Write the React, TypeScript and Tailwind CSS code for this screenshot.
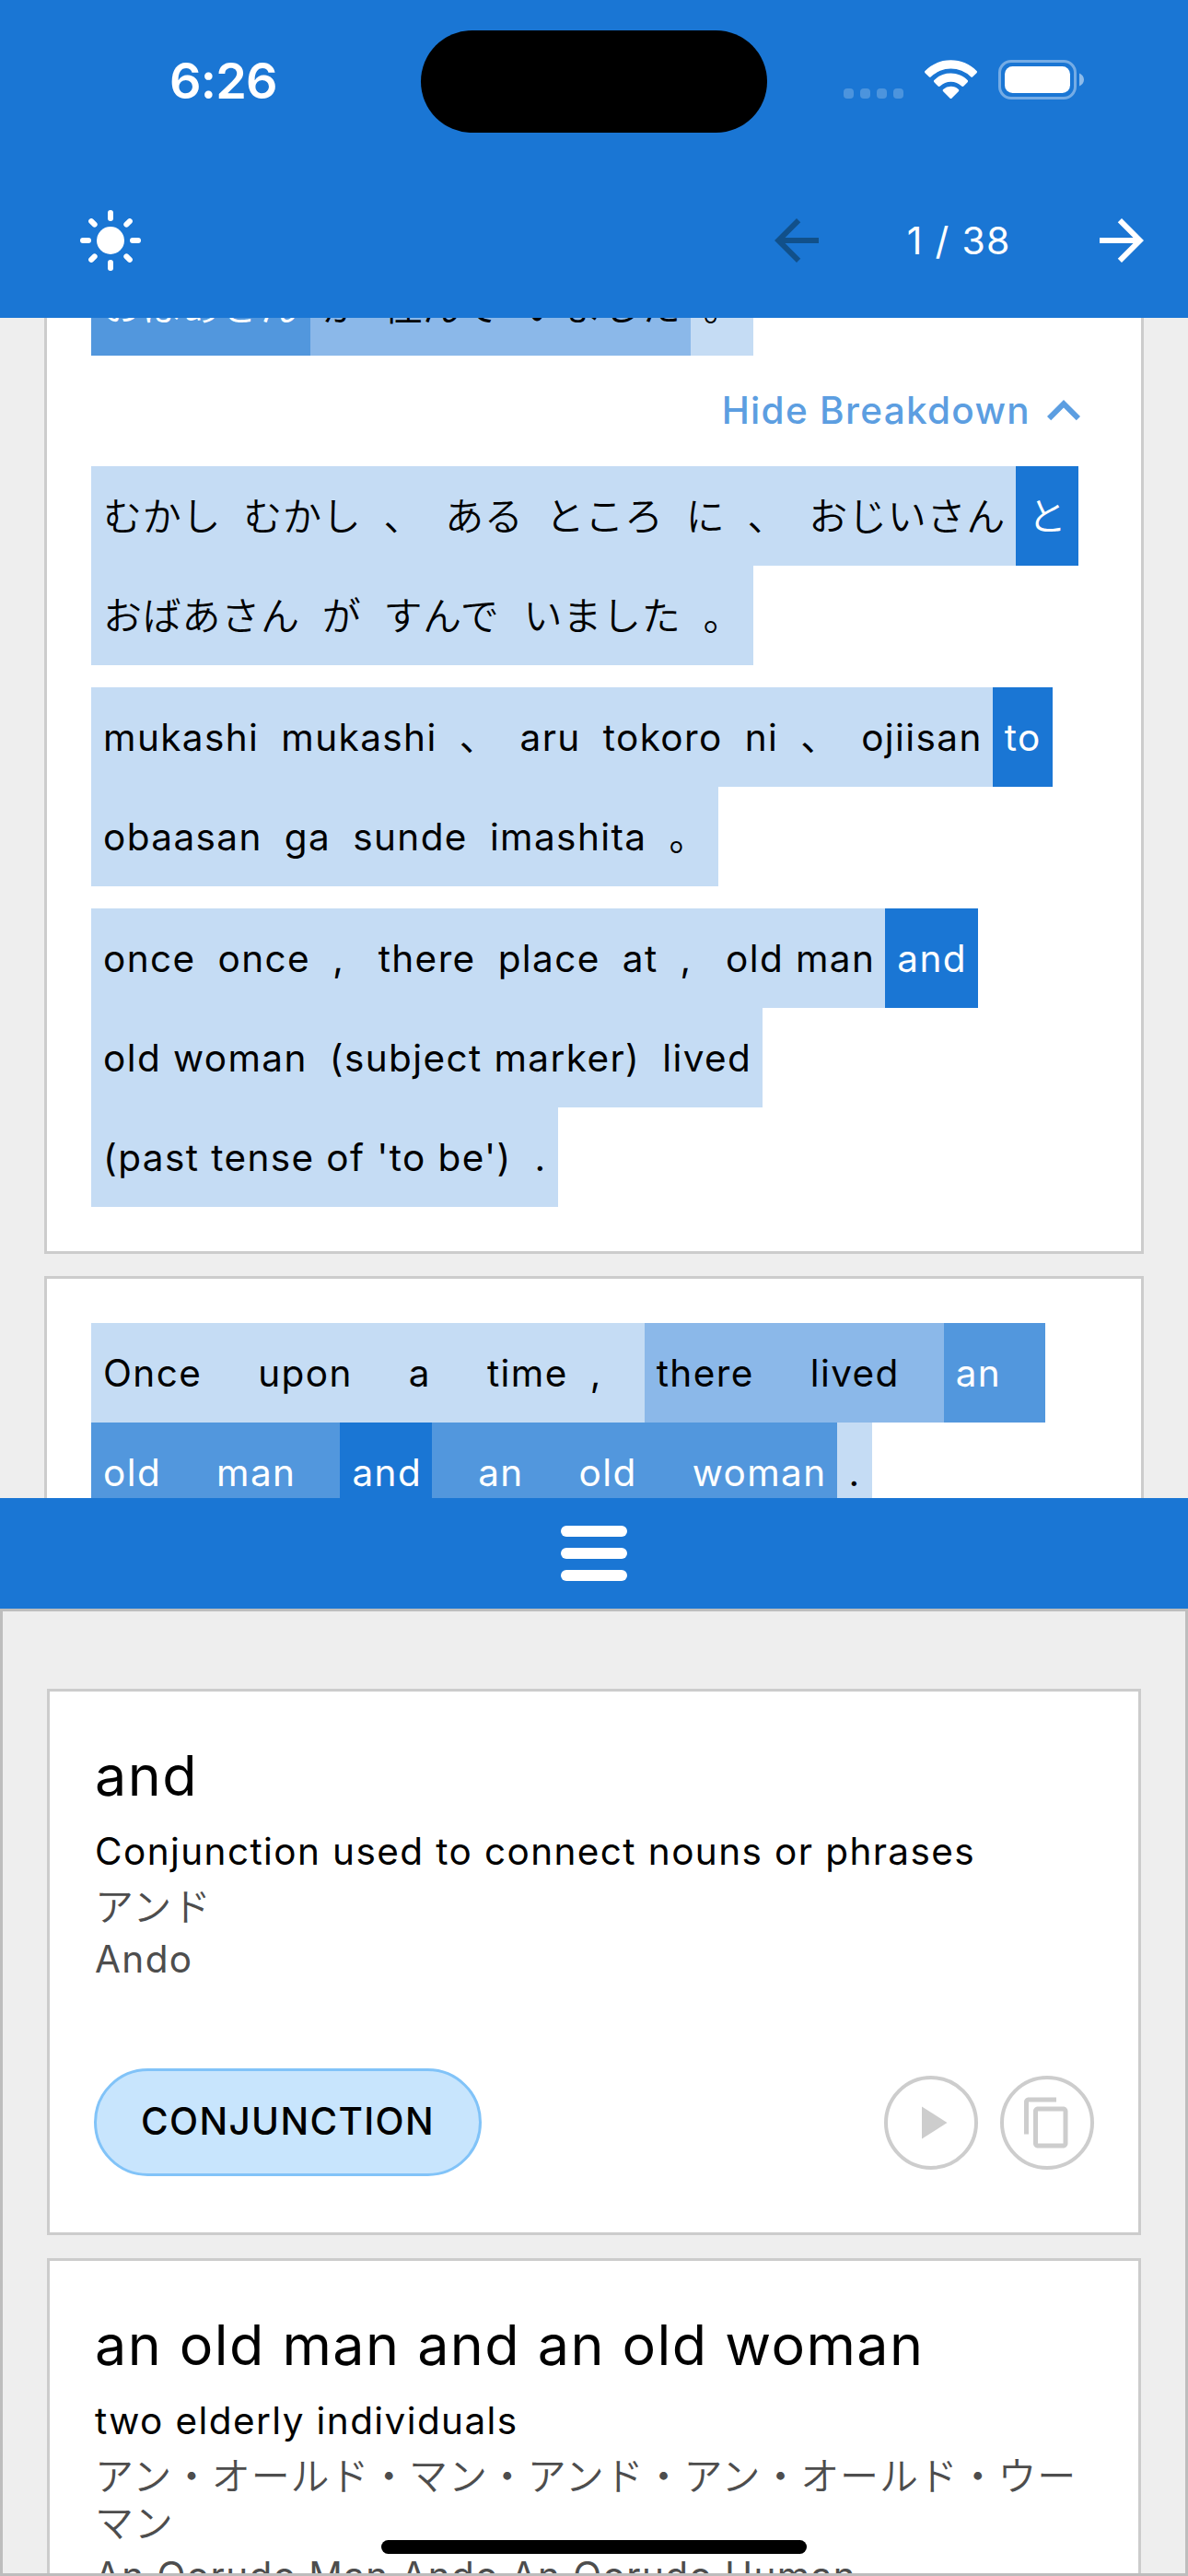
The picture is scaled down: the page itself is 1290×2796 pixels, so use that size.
import type { ReactNode } from 'react'
import { MdArrowBack, MdArrowForward, MdContentCopy, MdExpandLess, MdPlayArrow } from 'react-icons/md'

type Tone = 'base' | 'phrase' | 'group' | 'active'

interface Word {
  text: string
  tone?: Tone
  className?: string
}

const TONES: Record<Tone, string> = {
  base: 'bg-[#c5dcf4] text-black',
  phrase: 'bg-[#8bb8e9] text-black',
  group: 'bg-[#5297dd] text-white',
  active: 'bg-[#1a76d4] text-white'
}

const JP = "font-['Inter','Noto_Sans_CJK_JP',sans-serif] font-[350] text-[42px] tracking-[0.73px]"
const LATIN = "font-['Inter','Noto_Sans_CJK_JP',sans-serif] text-[40.5px] tracking-[1.4px]"

const clippedLine: Word[] = [
  { text: 'おばあさん', tone: 'group' },
  { text: 'が', tone: 'phrase' },
  { text: '住んで', tone: 'phrase' },
  { text: 'いました', tone: 'phrase', className: 'pl-[14px]' },
  { text: '。' }
]

const kanaLines: Word[][] = [
  [
    { text: 'むかし' },
    { text: 'むかし' },
    { text: '、' },
    { text: 'ある' },
    { text: 'ところ' },
    { text: 'に' },
    { text: '、' },
    { text: 'おじいさん' },
    { text: 'と', tone: 'active' }
  ],
  [
    { text: 'おばあさん' },
    { text: 'が' },
    { text: 'すんで' },
    { text: 'いました', className: 'pl-[14px]' },
    { text: '。' }
  ]
]

const romajiLines: Word[][] = [
  [
    { text: 'mukashi' },
    { text: 'mukashi' },
    { text: '、' },
    { text: 'aru' },
    { text: 'tokoro' },
    { text: 'ni' },
    { text: '、' },
    { text: 'ojiisan' },
    { text: 'to', tone: 'active' }
  ],
  [{ text: 'obaasan' }, { text: 'ga' }, { text: 'sunde' }, { text: 'imashita' }, { text: '。' }]
]

const glossLines: Word[][] = [
  [
    { text: 'once' },
    { text: 'once' },
    { text: ',', className: 'w-[50.5px]' },
    { text: 'there' },
    { text: 'place' },
    { text: 'at' },
    { text: ',', className: 'w-[50.5px]' },
    { text: 'old man' },
    { text: 'and', tone: 'active' }
  ],
  [{ text: 'old woman' }, { text: '(subject marker)' }, { text: 'lived' }],
  [{ text: "(past tense of 'to be')", className: 'w-[469.5px]' }, { text: '.' }]
]

const englishLines: Word[][] = [
  [
    { text: 'Once', className: 'pr-[49px]' },
    { text: 'upon', className: 'pr-[49px]' },
    { text: 'a', className: 'pr-[49px]' },
    { text: 'time' },
    { text: ',', className: 'w-[73px]' },
    { text: 'there', tone: 'phrase', className: 'pr-[49px]' },
    { text: 'lived', tone: 'phrase', className: 'pr-[49px]' },
    { text: 'an', tone: 'group', className: 'pr-12' }
  ],
  [
    { text: 'old', tone: 'group', className: 'pr-12' },
    { text: 'man', tone: 'group', className: 'pr-[49px]' },
    { text: 'and', tone: 'active' },
    { text: 'an', tone: 'group', className: 'pl-[49px] pr-12' },
    { text: 'old', tone: 'group', className: 'pr-12' },
    { text: 'woman', tone: 'group' },
    { text: '.' }
  ]
]

function WordLine({ words }: { words: Word[] }) {
  return (
    <div className="flex h-[108px]">
      {words.map((word, i) => (
        <span
          key={i}
          className={`shrink-0 whitespace-pre px-3 indent-px -mr-px leading-[110px] ${TONES[word.tone ?? 'base']} ${word.className ?? ''}`}
        >
          {word.text}
        </span>
      ))}
    </div>
  )
}

function WordBlock({ lines, font }: { lines: Word[][]; font: string }) {
  return (
    <div className={font}>
      {lines.map((words, i) => (
        <WordLine key={i} words={words} />
      ))}
    </div>
  )
}

function StatusBar() {
  return (
    <div className="flex h-[177px] pt-[33px]">
      <div className="w-[457px] pl-[184px] pt-[22px] text-[54px] font-semibold leading-[66px] tracking-[-0.8px]">6:26</div>
      <div className="h-[111px] w-[376px] rounded-full bg-black" />
      <svg className="ml-[83px] mt-8" width="262" height="44" viewBox="916 65 262 44" fill="none">
        {[916, 934, 952, 970].map(x => (
          <rect key={x} x={x} y="96" width="11" height="11" rx="4" fill="#fff" opacity=".22" />
        ))}
        <g fill="#fff">
          <path d="M1032.5 65.3c11 0 20.8 4.4 28 11.6.7.7.7 1.6 0 2.3l-4.2 4.1c-.6.7-1.6.7-2.2 0a31 31 0 0 0-43.2 0c-.6.7-1.6.7-2.2 0l-4.2-4.1c-.7-.7-.7-1.6 0-2.3a39.5 39.5 0 0 1 28-11.6z" />
          <path d="M1032.5 79.6c7 0 13.4 2.8 18.1 7.4.7.6.7 1.6 0 2.3l-4.2 4.2c-.6.6-1.6.6-2.2 0a17 17 0 0 0-23.400 0c-.6.6-1.6.6-2.2 0l-4.2-4.2c-.7-.7-.7-1.7 0-2.3a25.800 25.800 0 0 1 18.1-7.4z" />
          <path d="M1032.5 93.8c3.2 0 6.1 1.200 8.300 3.100.7.6.7 1.600 0 2.300l-7.2 7.300c-.6.700-1.600.7-2.200 0l-7.200-7.300c-.7-.7-.7-1.700 0-2.300a12.600 12.600 0 0 1 8.300-3.100z" />
        </g>
        <rect x="1085.5" y="66.5" width="82" height="40" rx="12.5" stroke="#fff" strokeWidth="3" opacity=".4" />
        <rect x="1091" y="72" width="71" height="29" rx="8.5" fill="#fff" />
        <path d="M1172 79.5c3 1.200 5 3.900 5 7s-2 5.800-5 7z" fill="#fff" opacity=".5" />
      </svg>
    </div>
  )
}

function SunIcon() {
  return (
    <svg width="72" height="72" viewBox="-36 -36 72 72">
      <circle r="15" fill="#fff" />
      {[0, 45, 90, 135, 180, 225, 270, 315].map(angle => (
        <path
          key={angle}
          d={angle % 90 === 0 ? 'M0-30v6' : 'M0-29.500v5'}
          transform={`rotate(${angle})`}
          stroke="#fff"
          strokeWidth="6"
          strokeLinecap="round"
        />
      ))}
    </svg>
  )
}

function Header() {
  return (
    <header className="h-[345px] bg-[#1a76d4] text-white">
      <StatusBar />
      <div className="flex h-[168px] items-center pl-[84px] pr-9">
        <SunIcon />
        <MdArrowBack className="ml-auto size-[72px] text-[#11508a]" />
        <span className="w-[281.5px] pt-0.5 text-center text-[41px] tracking-[1.3px]">1 / 38</span>
        <MdArrowForward className="size-[72px]" />
      </div>
    </header>
  )
}

function Reader() {
  return (
    <main className="h-[1281px] overflow-hidden px-12">
      <section className="-mt-[118px] border-[3px] border-[#ccc] bg-white p-12">
        <WordBlock lines={[clippedLine]} font={JP} />
        <div className="flex h-[120px] items-center justify-end text-[#5c9ee1]">
          <span className="text-[40.5px] font-medium tracking-[1.3px]">Hide Breakdown</span>
          <MdExpandLess className="size-[72px]" />
        </div>
        <div className="flex flex-col gap-6">
          <WordBlock lines={kanaLines} font={JP} />
          <WordBlock lines={romajiLines} font={LATIN} />
          <WordBlock lines={glossLines} font={LATIN} />
        </div>
      </section>
      <section className="mt-6 border-[3px] border-[#ccc] bg-white p-12">
        <WordBlock lines={englishLines} font={LATIN} />
      </section>
    </main>
  )
}

function DragBar() {
  return (
    <div className="flex h-[120px] flex-col items-center justify-center gap-3 bg-[#1a76d4]">
      <span className="h-3 w-[72px] rounded-full bg-white" />
      <span className="h-3 w-[72px] rounded-full bg-white" />
      <span className="h-3 w-[72px] rounded-full bg-white" />
    </div>
  )
}

function RoundButton({ children }: { children: ReactNode }) {
  return (
    <button className="flex size-[102px] items-center justify-center rounded-full border-[4.5px] border-[#cdcdcd] text-[#cdcdcd]">
      {children}
    </button>
  )
}

interface EntryProps {
  title: string
  meaning: string
  kana: string
  romaji: string
  tag?: string
}

function Entry({ title, meaning, kana, romaji, tag }: EntryProps) {
  return (
    <article className="border-[3px] border-[#ccc] bg-white px-12 pb-[61px] pt-[46px]">
      <h2 className="pl-px text-[61px] leading-[90px] tracking-[1.45px]">{title}</h2>
      <p className="mt-1.5 pl-px text-[40.5px] leading-[63px] tracking-[1.4px]">{meaning}</p>
      <p className="mt-[3px] break-all pl-px font-[350] text-[42px] leading-[51px] tracking-[0.85px] text-[#4d4d4d]">
        {kana}
      </p>
      <p className="mt-[3px] pl-px text-[40.5px] leading-[57px] tracking-[1.4px] text-[#4d4d4d]">{romaji}</p>
      {tag && (
        <div className="mt-[90px] flex items-center gap-6">
          <span className="mr-auto flex h-[117px] w-[421px] items-center justify-center rounded-full border-[3px] border-[#81c3f8] bg-[#c8e5fd] text-[40.5px] font-medium tracking-[1.35px]">
            {tag}
          </span>
          <RoundButton>
            <MdPlayArrow className="size-[60px]" />
          </RoundButton>
          <RoundButton>
            <MdContentCopy className="size-[60px]" />
          </RoundButton>
        </div>
      )}
    </article>
  )
}

export default function App() {
  return (
    <div className="relative flex h-[2796px] w-[1290px] flex-col overflow-hidden bg-[#eee] font-['Inter','Noto_Sans_CJK_JP',sans-serif] text-black">
      <Header />
      <Reader />
      <DragBar />
      <div className="flex h-[1050px] flex-col gap-[25px] overflow-hidden border-[3px] border-[#bdbdbd] px-12 pt-[84px]">
        <Entry
          title="and"
          meaning="Conjunction used to connect nouns or phrases"
          kana="アンド"
          romaji="Ando"
          tag="CONJUNCTION"
        />
        <Entry
          title="an old man and an old woman"
          meaning="two elderly individuals"
          kana="アン・オールド・マン・アンド・アン・オールド・ウーマン"
          romaji="An Oorudo Man Ando An Oorudo Uuman"
        />
      </div>
      {/* Home indicator */}
      <div className="absolute bottom-6 left-[414px] h-[15px] w-[462px] rounded-full bg-black" />
    </div>
  )
}
